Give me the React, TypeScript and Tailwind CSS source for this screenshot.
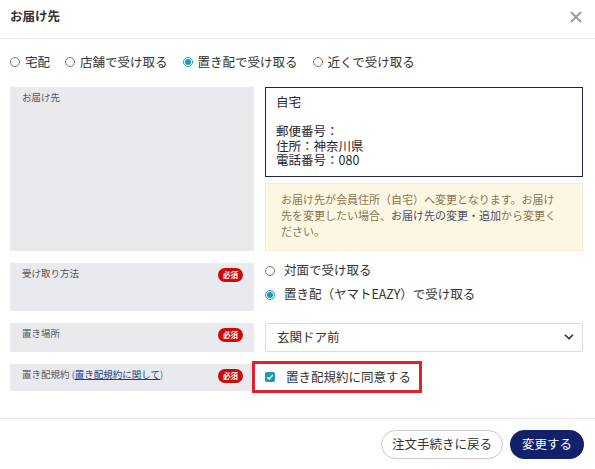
import { ChevronDown } from "lucide-react";

const font = { fontFamily: '"Noto Sans CJK JP", "Noto Sans", sans-serif' };

function Radio({ checked = false }: { checked?: boolean }) {
  return checked ? (
    <span className="shrink-0 w-[10px] h-[10px] rounded-full border border-[#1a9bb0] flex items-center justify-center">
      <span className="w-[6px] h-[6px] rounded-full bg-[#1a9bb0]" />
    </span>
  ) : (
    <span className="shrink-0 w-[10px] h-[10px] rounded-full border border-[#777] bg-white" />
  );
}

function Required() {
  return (
    <span className="shrink-0 mt-[5px] w-[25px] h-[14px] rounded-full bg-[#cc0a0a] text-white text-[7.5px] font-bold leading-[14px] text-center">
      必須
    </span>
  );
}

function Label({ children, required = false, className = "" }: { children: React.ReactNode; required?: boolean; className?: string }) {
  return (
    <div className={`bg-[#e9eaee] pl-[12px] pr-[11px] flex justify-between items-start ${className}`}>
      <div className="pt-[4px] text-[9.5px] leading-[12px] text-[#555]">{children}</div>
      {required && <Required />}
    </div>
  );
}

const methods = [
  { label: "宅配", checked: false },
  { label: "店舗で受け取る", checked: false },
  { label: "置き配で受け取る", checked: true },
  { label: "近くで受け取る", checked: false },
];

export default function App() {
  return (
    <div className="w-[595px] h-[469px] bg-white text-[#333] flex flex-col" style={font}>
      {/* header */}
      <div className="h-[39px] border-b border-[#e6e6e6] flex items-start justify-between pl-[10px] pr-[13px] pt-[8px]">
        <div className="text-[12.5px] leading-[16px] font-bold text-[#333]">お届け先</div>
        <svg width="12" height="12" viewBox="0 0 12 12" className="mt-[3px]">
          <path d="M1 1L11 11M11 1L1 11" stroke="#9a9a9a" strokeWidth="1.8" />
        </svg>
      </div>

      {/* delivery method */}
      <div className="pl-[10px] pt-[15px] flex gap-[15px] text-[12.5px] leading-[16px]">
        {methods.map((m) => (
          <div key={m.label} className="flex items-center gap-[5px]">
            <Radio checked={m.checked} />
            <span>{m.label}</span>
          </div>
        ))}
      </div>

      <div className="mt-[17px] pl-[10px] pr-[12px] grid grid-cols-[244px_1fr] gap-x-[11px] gap-y-[12px]">
        {/* address */}
        <Label>お届け先</Label>
        <div className="flex flex-col gap-[6px]">
          <div className="border-[1.5px] border-[#1b2550] pl-[10px] pt-[7px] pb-[8px] text-[12.5px] leading-[14.5px] text-[#1f2633]">
            <div>自宅</div>
            <div>&nbsp;</div>
            <div>郵便番号：</div>
            <div>住所：神奈川県</div>
            <div>電話番号：080</div>
          </div>
          <div className="bg-[#fcf7e3] border border-[#f6edd0] pl-[15px] pr-[22px] pt-[7px] pb-[11px] text-[11px] leading-[16px] text-[#8a7550]">
            お届け先が会員住所（自宅）へ変更となります。お届け先を変更したい場合、
            <span className="text-[#46506e]">お届け先の変更・追加</span>
            から変更ください。
          </div>
        </div>

        {/* receive method */}
        <Label required className="min-h-[48px]">受け取り方法</Label>
        <div className="-mt-[2px] flex flex-col gap-[4px] text-[12.5px]">
          <div className="h-[20px] flex items-center gap-[9px]">
            <Radio />
            <span>対面で受け取る</span>
          </div>
          <div className="h-[20px] flex items-center gap-[9px]">
            <Radio checked />
            <span>置き配（ヤマトEAZY）で受け取る</span>
          </div>
        </div>

        {/* place */}
        <Label required>置き場所</Label>
        <div className="h-[29px] border border-[#dcdcdc] rounded-[2px] flex items-center justify-between pl-[11px] pr-[6px] text-[12.5px]">
          <span>玄関ドア前</span>
          <ChevronDown size={14} strokeWidth={3} color="#333" />
        </div>

        {/* terms */}
        <Label required className="h-[27px]">
          置き配規約 (<span className="text-[#2a3a86] underline">置き配規約に関して</span>)
        </Label>
        <div className="relative h-[27px] flex items-center gap-[11px] text-[12.5px]">
          <span className="w-[10px] h-[10px] rounded-[2px] bg-[#1a9bb0] flex items-center justify-center">
            <svg width="8" height="8" viewBox="0 0 8 8">
              <path d="M1.3 4.2L3.2 6L6.8 1.9" stroke="white" strokeWidth="1.5" fill="none" />
            </svg>
          </span>
          <span>置き配規約に同意する</span>
          <div className="absolute -left-[13px] -top-[3px] w-[170px] h-[32px] border-[3px] border-[#e3202b]" />
        </div>
      </div>

      {/* footer */}
      <div className="mt-auto border-t border-[#e6e6e6] h-[51px] flex justify-end items-start gap-[7px] pt-[11px] pr-[11px] text-[12.5px]">
        <button className="h-[29px] px-[10px] rounded-full border border-[#c8c8c8] bg-white text-[#333]">
          注文手続きに戻る
        </button>
        <button className="h-[29px] px-[12px] rounded-full bg-[#13206a] text-white">変更する</button>
      </div>
    </div>
  );
}
